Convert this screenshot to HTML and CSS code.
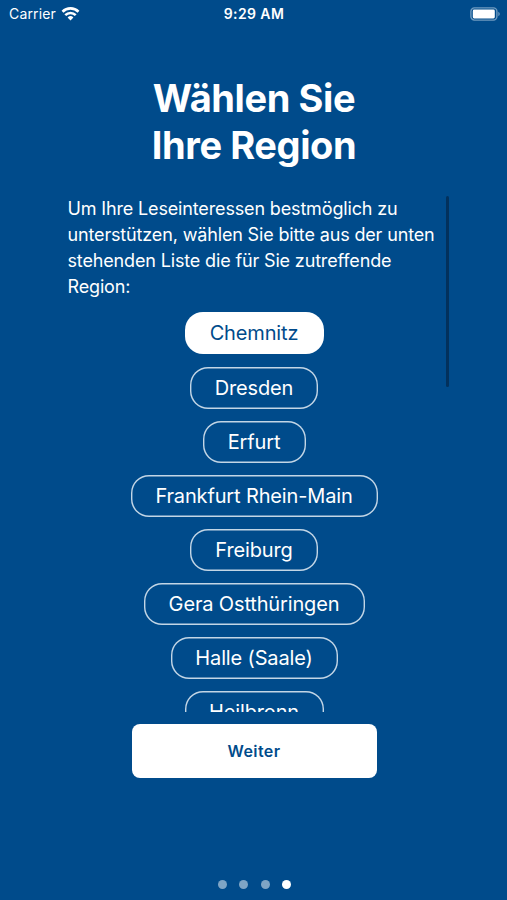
FILE: index.html
```html
<!DOCTYPE html>
<html lang="de">
<head>
    <meta charset="UTF-8">
    <meta name="viewport" content="width=device-width, initial-scale=1.0">
    <title>Wählen Sie Ihre Region</title>
    <link rel="stylesheet" href="styles.css">
</head>
<body>
    <header class="status-bar">
        <div class="carrier">
            <span class="carrier-name">Carrier</span>
            <svg class="wifi" width="19" height="14" viewBox="0 0 18 14" fill="none" stroke="#fff" stroke-width="2.6">
                <path d="M1 4.7a11.4 11.4 0 0 1 16 0"/>
                <path d="M3.8 8.2a7.4 7.4 0 0 1 10.4 0"/>
                <path d="M9 13.4 6.1 10.5a4.1 4.1 0 0 1 5.8 0z" fill="#fff" stroke="none"/>
            </svg>
        </div>
        <span class="time">9:29 AM</span>
        <svg class="battery" width="31" height="14" viewBox="0 0 31 14">
            <rect x=".9" y=".9" width="26" height="12.2" rx="3.5" fill="none" stroke="#6f9bc0" stroke-width="1.4"/>
            <rect x="2.8" y="2.6" width="22" height="8.8" rx="1.4" fill="#fff"/>
            <path d="M28.3 4.8v4.4c2-.8 2-3.6 0-4.4z" fill="#6f9bc0"/>
        </svg>
    </header>
    <main class="page">
        <h1>Wählen Sie<br>Ihre Region</h1>
        <div class="scroll-area">
            <p class="intro">Um Ihre Leseinteressen bestmöglich zu<br>unterstützen, wählen Sie bitte aus der unten<br>stehenden Liste die für Sie zutreffende<br>Region:</p>
            <div class="regions">
                <button class="region chemnitz selected">Chemnitz</button>
                <button class="region dresden">Dresden</button>
                <button class="region erfurt">Erfurt</button>
                <button class="region frankfurt">Frankfurt Rhein-Main</button>
                <button class="region freiburg">Freiburg</button>
                <button class="region gera">Gera Ostthüringen</button>
                <button class="region halle">Halle (Saale)</button>
                <button class="region heilbronn">Heilbronn</button>
            </div>
            <div class="scroll-thumb"></div>
        </div>
        <button class="next">Weiter</button>
    </main>
    <footer class="dots">
        <span class="dot"></span>
        <span class="dot"></span>
        <span class="dot"></span>
        <span class="dot active"></span>
    </footer>
</body>
</html>
```

FILE: styles.css
```css
* {
    box-sizing: border-box;
}
body {
    margin: 0;
    height: 900px;
    overflow: hidden;
    display: flex;
    flex-direction: column;
    background-color: #004b8b;
    color: #fff;
    font-family: Inter, "Liberation Sans", sans-serif;
}
.status-bar {
    height: 27px;
    padding: 0 6px 0 9px;
    display: grid;
    grid-template-columns: 1fr auto 1fr;
    align-items: center;
}
.carrier {
    display: flex;
    align-items: center;
    gap: 5px;
    font-size: 14px;
    letter-spacing: 0.15px;
}
.time {
    font-size: 14px;
    font-weight: 600;
    letter-spacing: 0.4px;
    margin-right: 2px;
}
.battery {
    justify-self: end;
}
.page {
    display: flex;
    flex-direction: column;
    align-items: center;
    padding-left: 1px;
}
h1 {
    margin: 48px 0 0;
    font-size: 38px;
    line-height: 46.5px;
    letter-spacing: -0.4px;
    text-align: center;
}
.scroll-area {
    position: relative;
    width: 392px;
    height: 517px;
    margin-top: 27px;
    overflow: hidden;
}
.intro {
    margin: 0;
    padding: 1px 0 0 9.5px;
    font-size: 18px;
    line-height: 26px;
    letter-spacing: -0.15px;
    white-space: nowrap;
}
.regions {
    display: flex;
    flex-direction: column;
    align-items: center;
    gap: 12.17px;
    margin-top: 12.4px;
}
.region {
    flex-shrink: 0;
    height: 42px;
    padding: 0;
    border: none;
    border-radius: 18px;
    background: none;
    box-shadow: inset 0 0 0 1.4px #c3d6e6;
    color: #fff;
    font-family: inherit;
    font-size: 20px;
    letter-spacing: -0.15px;
}
.selected {
    background-color: #fff;
    box-shadow: none;
    color: #004b8b;
}
.chemnitz, .heilbronn {
    width: 139px;
}
.dresden, .freiburg {
    width: 128px;
}
.erfurt {
    width: 103px;
}
.frankfurt {
    width: 247px;
}
.gera {
    width: 221px;
}
.halle {
    width: 167px;
}
.scroll-thumb {
    position: absolute;
    top: 1px;
    right: 1px;
    width: 3px;
    height: 191px;
    border-radius: 2px;
    background-color: #03315c;
}
.next {
    width: 245px;
    height: 54px;
    margin-top: 12px;
    border: none;
    border-radius: 8px;
    background-color: #fff;
    color: #004b8b;
    font-family: inherit;
    font-size: 16px;
    font-weight: 600;
    letter-spacing: 0.4px;
}
.dots {
    display: flex;
    justify-content: center;
    gap: 12.5px;
    margin-top: auto;
    padding: 0 0 11px 2px;
}
.dot {
    width: 9px;
    height: 9px;
    border-radius: 50%;
    background-color: #7fa5c5;
}
.active {
    background-color: #fff;
}
```
